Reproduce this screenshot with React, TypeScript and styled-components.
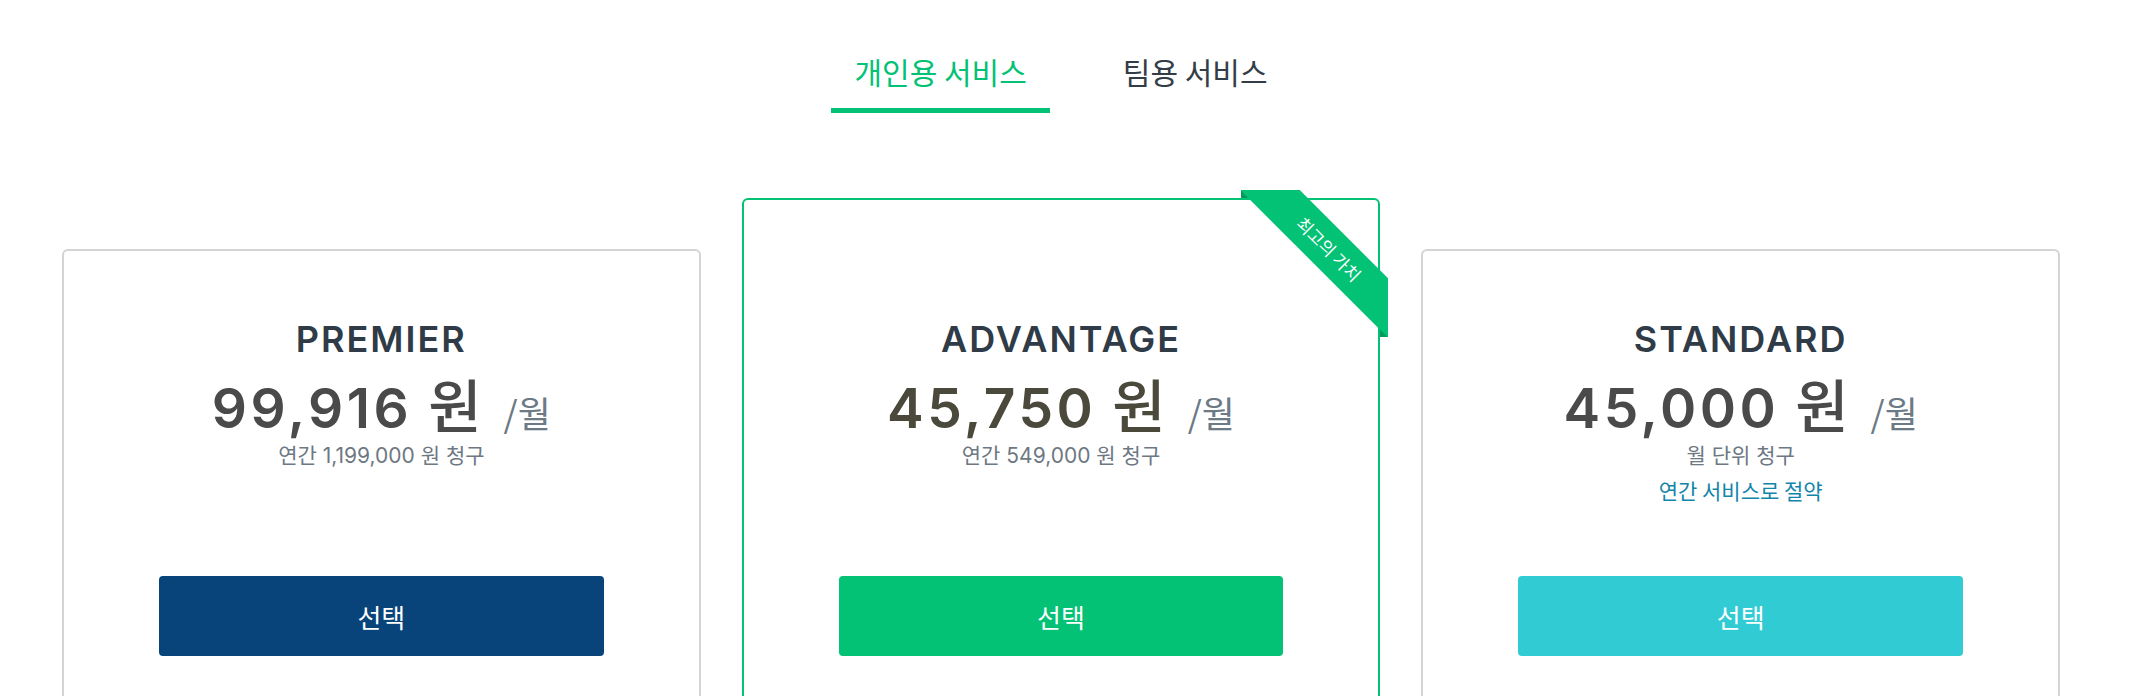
import styled, { createGlobalStyle } from 'styled-components';

const GlobalStyle = createGlobalStyle`
  html, body {
    margin: 0;
    padding: 0;
    background: #ffffff;
    overflow: hidden;
  }
  body {
    font-family: Inter, "Noto Sans CJK KR", sans-serif;
    color: #313c48;
  }
`;

const Page = styled.div`
  padding: 0 70px 0 62px;
`;

const Tabs = styled.nav`
  display: flex;
  justify-content: center;
  gap: 50px;
  padding-top: 50px;
`;

const Tab = styled.div<{ $active?: boolean }>`
  font-family: "Noto Sans CJK KR", sans-serif;
  font-size: 30px;
  line-height: 42px;
  padding: 0 23px 16px;
  border-bottom: 5px solid ${(p) => (p.$active ? '#03c175' : 'transparent')};
  color: ${(p) => (p.$active ? '#03c175' : '#333d47')};
  cursor: pointer;
`;

const Cards = styled.div`
  display: flex;
  align-items: center;
  gap: 41px;
  margin-top: 85px;
`;

const Card = styled.div<{ $featured?: boolean }>`
  position: relative;
  flex: 1;
  display: flex;
  flex-direction: column;
  align-items: center;
  border: 2px solid ${(p) => (p.$featured ? '#03c175' : '#d4d4d4')};
  border-radius: 6px;
  padding: ${(p) => (p.$featured ? '117px 0 111px' : '66px 0 60px')};
`;

const Info = styled.div`
  height: 259px;
  display: flex;
  flex-direction: column;
  align-items: center;
`;

const PlanName = styled.h2`
  margin: 0;
  font-size: 36px;
  line-height: 44px;
  font-weight: 600;
  letter-spacing: 2px;
  color: #2f3b47;
`;

const PriceRow = styled.div`
  display: flex;
  align-items: baseline;
  margin-top: 0;
  height: 68px;
`;

const Amount = styled.span<{ $color: string }>`
  font-size: 55px;
  font-weight: 600;
  letter-spacing: 3.5px;
  color: ${(p) => p.$color};
`;

const Won = styled.span`
  font-family: "Noto Sans CJK KR", sans-serif;
  font-weight: 500;
  font-size: 58px;
  letter-spacing: 0;
  margin-left: 16px;
`;

const Period = styled.span`
  font-family: "Noto Sans CJK KR", sans-serif;
  font-size: 36px;
  color: #6c7a86;
  margin-left: 22px;
`;

const Billing = styled.div`
  font-family: Inter, "Noto Sans CJK KR", sans-serif;
  font-size: 21px;
  line-height: 29px;
  color: #6d7883;
  margin-top: 12px;
`;

const SaveLink = styled.a`
  font-family: "Noto Sans CJK KR", sans-serif;
  font-size: 21px;
  line-height: 29px;
  color: #1384aa;
  margin-top: 6px;
  text-decoration: none;
  cursor: pointer;
`;

const SelectButton = styled.button<{ $bg: string }>`
  width: calc(100% - 190px);
  height: 80px;
  border: 0;
  border-radius: 4px;
  background: ${(p) => p.$bg};
  color: #ffffff;
  font-family: "Noto Sans CJK KR", sans-serif;
  font-size: 26px;
  cursor: pointer;
`;

const Ribbon = styled.div`
  position: absolute;
  top: -10px;
  right: -10px;
  width: 147px;
  height: 147px;
  pointer-events: none;

  &::before,
  &::after {
    content: '';
    position: absolute;
    width: 8px;
    height: 8px;
    background: #08985c;
  }
  &::before {
    top: 0;
    left: 0;
  }
  &::after {
    bottom: 0;
    right: 0;
  }
`;

const RibbonClip = styled.div`
  position: absolute;
  inset: 0;
  overflow: hidden;
  z-index: 1;
`;

const RibbonBand = styled.span`
  position: absolute;
  left: -22px;
  top: 38px;
  width: 220px;
  height: 42px;
  transform: rotate(45deg);
  background: #03c175;
  color: #ffffff;
  font-family: "Noto Sans CJK KR", sans-serif;
  font-size: 17px;
  line-height: 42px;
  text-align: center;
`;

type Plan = {
  name: string;
  amount: string;
  amountColor: string;
  billing: string;
  saveLink?: string;
  button: string;
  featured?: boolean;
  ribbon?: string;
};

const plans: Plan[] = [
  {
    name: 'PREMIER',
    amount: '99,916',
    amountColor: '#4a4a4a',
    billing: '연간 1,199,000 원 청구',
    button: '#08447a',
  },
  {
    name: 'ADVANTAGE',
    amount: '45,750',
    amountColor: '#4a493b',
    billing: '연간 549,000 원 청구',
    button: '#03c175',
    featured: true,
    ribbon: '최고의 가치',
  },
  {
    name: 'STANDARD',
    amount: '45,000',
    amountColor: '#4a4a4a',
    billing: '월 단위 청구',
    saveLink: '연간 서비스로 절약',
    button: '#31ccd3',
  },
];

export default function App() {
  return (
    <>
      <GlobalStyle />
      <Page>
        <Tabs>
          <Tab $active>개인용 서비스</Tab>
          <Tab>팀용 서비스</Tab>
        </Tabs>
        <Cards>
          {plans.map((plan) => (
            <Card key={plan.name} $featured={plan.featured}>
              {plan.ribbon && (
                <Ribbon>
                  <RibbonClip>
                    <RibbonBand>{plan.ribbon}</RibbonBand>
                  </RibbonClip>
                </Ribbon>
              )}
              <Info>
                <PlanName>{plan.name}</PlanName>
                <PriceRow>
                  <Amount $color={plan.amountColor}>
                    {plan.amount}
                    <Won>원</Won>
                  </Amount>
                  <Period>/월</Period>
                </PriceRow>
                <Billing>{plan.billing}</Billing>
                {plan.saveLink && <SaveLink>{plan.saveLink}</SaveLink>}
              </Info>
              <SelectButton $bg={plan.button}>선택</SelectButton>
            </Card>
          ))}
        </Cards>
      </Page>
    </>
  );
}
